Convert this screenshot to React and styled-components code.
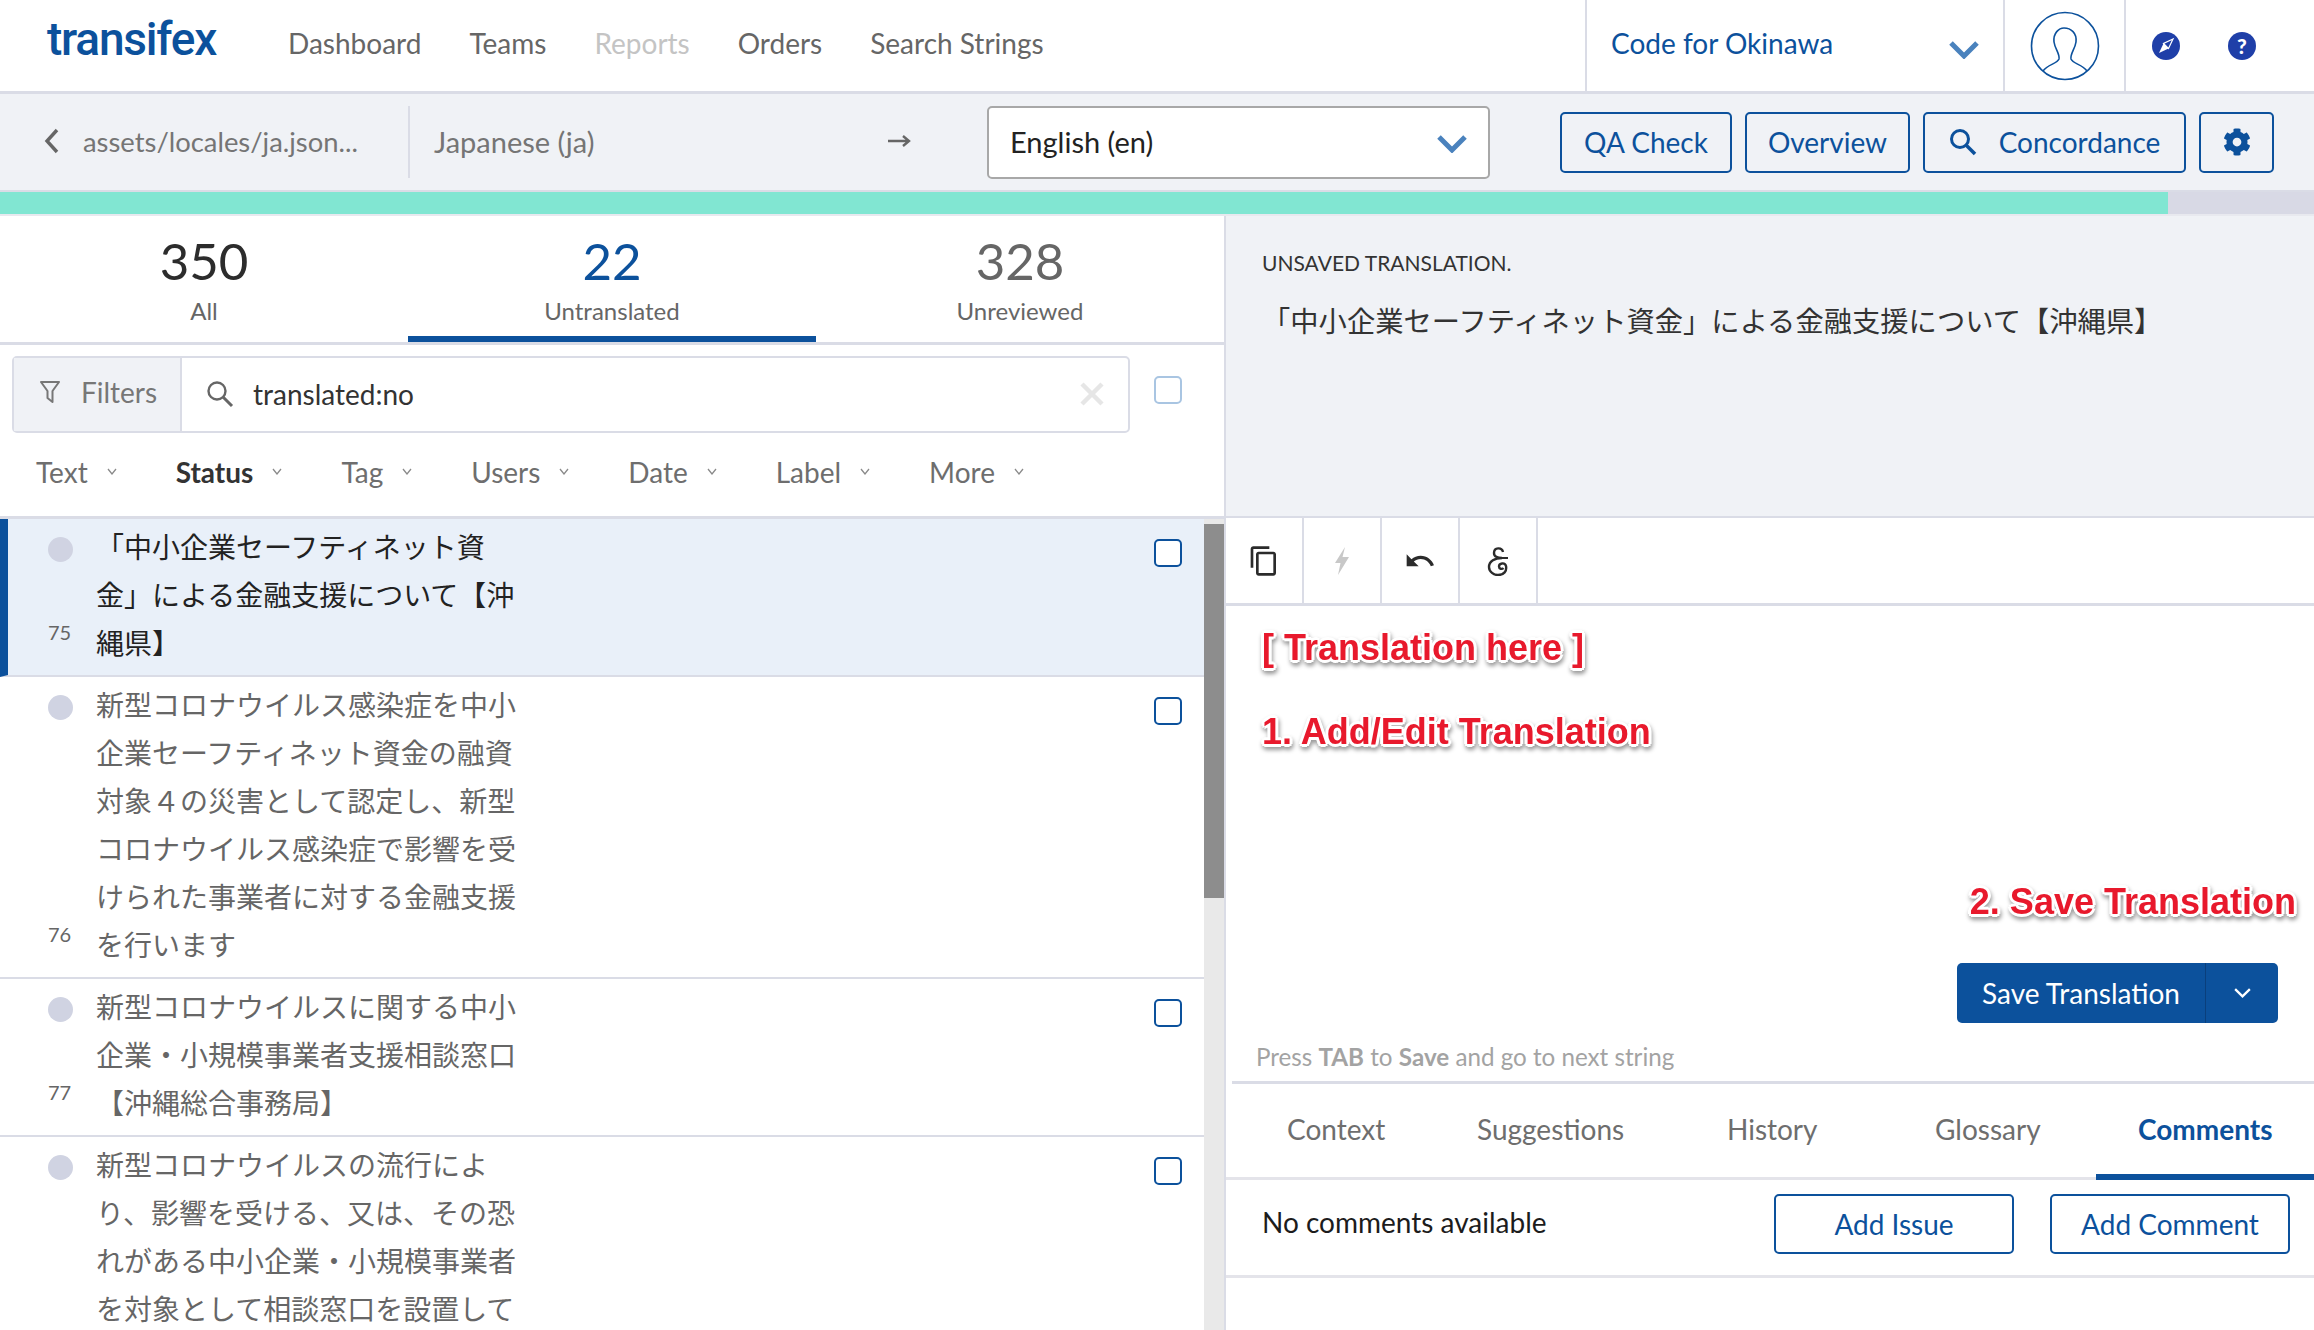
import React from "react";
import styled, { createGlobalStyle } from "styled-components";
import { FaCog } from "react-icons/fa";
import { MdContentCopy, MdUndo } from "react-icons/md";

const BLUE = "#0c519c";
const LINE = "#dadce6";
const SANS = `Lato, "Noto Sans CJK JP", sans-serif`;
const CJK = `"Noto Sans CJK JP", sans-serif`;

const GlobalStyle = createGlobalStyle`
  html, body {
    margin: 0;
    padding: 0;
    background: #fff;
    font-family: ${SANS};
  }
  * {
    box-sizing: border-box;
  }
`;

const Page = styled.div`
  width: 2314px;
  height: 1330px;
  overflow: hidden;
  display: flex;
  flex-direction: column;
`;

const TopNav = styled.header`
  height: 94px;
  flex: none;
  display: flex;
  border-bottom: 3px solid ${LINE};
`;

const Logo = styled.div`
  width: 288px;
  padding: 11px 0 0 47px;
  font-family: Roboto, sans-serif;
  font-size: 46px;
  font-weight: 500;
  line-height: 56px;
  letter-spacing: -1.2px;
  color: ${BLUE};
`;

const NavLinks = styled.nav`
  flex: 1;
  display: flex;
  gap: 48px;
  padding-top: 26px;
`;

const NavLink = styled.span`
  font-size: 28px;
  line-height: 34px;
  color: ${(p) => (p.$off ? "#c4c4c4" : "#666")};
`;

const OrgPicker = styled.div`
  width: 418px;
  display: flex;
  align-items: center;
  justify-content: space-between;
  padding: 0 24px 6px 24px;
  border-left: 2px solid ${LINE};
  font-size: 28px;
  color: ${BLUE};

  svg {
    margin-top: 14px;
  }
`;

const AvatarCell = styled.div`
  width: 121px;
  display: flex;
  align-items: center;
  justify-content: center;
  border-left: 2px solid ${LINE};
`;

const HelpCell = styled.div`
  width: 190px;
  display: flex;
  align-items: center;
  gap: 48px;
  padding-left: 26px;
  border-left: 2px solid ${LINE};
`;

const SubBar = styled.div`
  height: 98px;
  flex: none;
  display: flex;
  align-items: center;
  background: #f0f2f6;
  border-bottom: 2px solid ${LINE};
`;

const BackLink = styled.div`
  width: 410px;
  height: 72px;
  display: flex;
  align-items: center;
  gap: 23px;
  padding: 0 0 2px 44px;
  border-right: 2px solid ${LINE};
  font-size: 27.4px;
  color: #757575;
`;

const SourceLang = styled.div`
  width: 577px;
  display: flex;
  align-items: center;
  justify-content: space-between;
  padding: 0 75px 2px 24px;
  font-size: 29px;
  color: #757575;
`;

const LangSelect = styled.div`
  width: 503px;
  height: 73px;
  display: flex;
  align-items: center;
  justify-content: space-between;
  padding: 0 21px 2px 21px;
  background: #fff;
  border: 2px solid #a8a8a8;
  border-radius: 5px;
  font-size: 29px;
  color: #222;

  svg {
    margin-top: 6px;
  }
`;

const SubActions = styled.div`
  display: flex;
  gap: 13px;
  margin-left: 70px;
`;

const ActionButton = styled.div`
  height: 61px;
  display: flex;
  align-items: center;
  justify-content: center;
  gap: 22px;
  width: ${(p) => p.$w}px;
  padding-bottom: 1px;
  border: 2px solid ${BLUE};
  border-radius: 5px;
  font-size: 28px;
  color: ${BLUE};
`;

const Progress = styled.div`
  height: 24px;
  flex: none;
  background: #d8d9e5;
  border-bottom: 2px solid #e8e9ef;
`;

const ProgressFill = styled.div`
  height: 100%;
  background: #81e6d2;
`;

const Main = styled.div`
  flex: 1;
  min-height: 0;
  display: flex;
`;

const LeftPanel = styled.section`
  width: 1226px;
  flex: none;
  display: flex;
  flex-direction: column;
  border-right: 2px solid ${LINE};
`;

const Stats = styled.div`
  height: 129px;
  flex: none;
  display: grid;
  grid-template-columns: 408px 408px 408px;
  border-bottom: 3px solid ${LINE};
`;

const Stat = styled.div`
  display: flex;
  flex-direction: column;
  align-items: center;
  height: 126px;
  padding-top: 17px;
  border-bottom: 6px solid ${(p) => (p.$active ? BLUE : "transparent")};
`;

const StatNumber = styled.div`
  font-size: 51px;
  line-height: 56px;
  color: ${(p) => p.$color};
`;

const StatLabel = styled.div`
  margin-top: 7px;
  font-size: 24px;
  line-height: 30px;
  color: #666;
`;

const FilterRow = styled.div`
  display: flex;
  align-items: flex-start;
  gap: 24px;
  padding: 11px 0 0 12px;
`;

const FilterBox = styled.div`
  width: 1118px;
  height: 77px;
  display: flex;
  border: 2px solid ${LINE};
  border-radius: 5px;
`;

const FilterTag = styled.div`
  width: 168px;
  display: flex;
  align-items: center;
  gap: 21px;
  padding: 0 0 6px 26px;
  background: #f0f2f6;
  border-right: 2px solid ${LINE};
  font-size: 28px;
  color: #777;
`;

const SearchField = styled.div`
  flex: 1;
  display: flex;
  align-items: center;
  gap: 19px;
  padding: 0 24px 2px;
  font-size: 28px;
  color: #333;
`;

const SearchText = styled.span`
  flex: 1;
`;

const Check = styled.div`
  width: 28px;
  height: 28px;
  flex: none;
  background: #fff;
  border: 2px solid ${(p) => (p.$pale ? "#a9c5e2" : BLUE)};
  border-radius: 5px;
`;

const PaleCheck = styled(Check)`
  margin-top: 20px;
`;

const Facets = styled.div`
  height: 86px;
  flex: none;
  display: flex;
  align-items: center;
  gap: 59px;
  padding: 0 0 6px 36px;
  border-bottom: 3px solid ${LINE};
`;

const Facet = styled.div`
  display: flex;
  align-items: center;
  gap: 19px;
  font-size: 28px;
  font-weight: ${(p) => (p.$bold ? 700 : 400)};
  color: ${(p) => (p.$bold ? "#333" : "#6e6e6e")};
`;

const ListArea = styled.div`
  flex: 1;
  min-height: 0;
  display: flex;
  overflow: hidden;
`;

const List = styled.div`
  flex: 1;
`;

const Row = styled.div`
  display: flex;
  padding: 3px 22px 9px ${(p) => (p.$active ? 40 : 48)}px;
  background: ${(p) => (p.$active ? "#e9f0f9" : "#fff")};
  border-left: ${(p) => (p.$active ? `8px solid ${BLUE}` : "none")};
  border-bottom: 2px solid ${LINE};
`;

const Gutter = styled.div`
  width: 48px;
  flex: none;
  display: flex;
  flex-direction: column;
  justify-content: space-between;
`;

const Dot = styled.div`
  width: 25px;
  height: 25px;
  margin-top: 15px;
  border-radius: 50%;
  background: #d0d3e2;
`;

const RowNumber = styled.div`
  margin-bottom: 22px;
  font-size: 20px;
  line-height: 24px;
  color: #666;
`;

const RowText = styled.div`
  width: 424px;
  font-family: ${CJK};
  font-size: 28px;
  line-height: 48px;
  color: ${(p) => (p.$active ? "#222" : "#666")};
`;

const RowCheck = styled(Check)`
  margin: 17px 0 0 auto;
`;

const ScrollTrack = styled.div`
  width: 20px;
  flex: none;
  padding-top: 5px;
  background: #e9e9e9;
`;

const ScrollThumb = styled.div`
  height: 374px;
  background: #8d8d8d;
`;

const RightPanel = styled.section`
  flex: 1;
  min-width: 0;
  display: flex;
  flex-direction: column;
`;

const Source = styled.div`
  height: 302px;
  flex: none;
  padding: 34px 36px 0;
  background: #f0f2f6;
  border-bottom: 2px solid ${LINE};
`;

const SourceNote = styled.div`
  font-size: 21px;
  line-height: 26px;
  color: #333;
`;

const SourceText = styled.div`
  margin-top: 22px;
  font-family: ${CJK};
  font-size: 28.3px;
  line-height: 44px;
  color: #333;
`;

const Toolbar = styled.div`
  height: 88px;
  flex: none;
  display: flex;
  border-bottom: 3px solid ${LINE};
`;

const Tool = styled.div`
  width: 78px;
  display: flex;
  align-items: center;
  justify-content: center;
  border-right: 2px solid ${LINE};
  color: #2b2b2b;
`;

const Editor = styled.div`
  height: 478px;
  flex: none;
  display: flex;
  flex-direction: column;
  margin-left: 6px;
  padding: 18px 36px 0 30px;
  border-bottom: 3px solid ${LINE};
`;

const Note = styled.div`
  font-family: "Liberation Sans", sans-serif;
  font-weight: 700;
  font-size: 36px;
  line-height: 48px;
  white-space: nowrap;
  color: #e8192c;
  text-shadow: 3px 0 0 #fff, -3px 0 0 #fff, 0 3px 0 #fff, 0 -3px 0 #fff,
    2px 2px 0 #fff, -2px 2px 0 #fff, 2px -2px 0 #fff, -2px -2px 0 #fff;
  filter: drop-shadow(1px 3px 2px rgba(0, 0, 0, 0.4));
`;

const SecondNote = styled(Note)`
  margin-top: 36px;
`;

const SaveNote = styled(Note)`
  align-self: flex-end;
  margin: 122px -18px 0 0;
`;

const SaveButton = styled.div`
  width: 321px;
  height: 60px;
  align-self: flex-end;
  display: flex;
  margin-top: 37px;
  background: ${BLUE};
  border-radius: 5px;
  color: #fff;
  font-size: 28px;
`;

const SaveLabel = styled.div`
  flex: 1;
  display: flex;
  align-items: center;
  justify-content: center;
  border-right: 1px solid #0a3f7c;
`;

const SaveCaret = styled.div`
  width: 72px;
  display: flex;
  align-items: center;
  justify-content: center;
`;

const Hint = styled.div`
  margin: 19px 0 0 -6px;
  font-size: 24.2px;
  line-height: 30px;
  color: #a3a3a3;
`;

const Tabs = styled.div`
  height: 96px;
  flex: none;
  display: flex;
  border-bottom: 3px solid #e4e4ea;
`;

const Tab = styled.div`
  width: ${(p) => p.$w}px;
  height: 96px;
  flex: none;
  padding: 27px 0 0 ${(p) => p.$pad}px;
  font-size: 28px;
  line-height: 36px;
  font-weight: ${(p) => (p.$active ? 700 : 400)};
  color: ${(p) => (p.$active ? BLUE : "#6e6e6e")};
  border-bottom: 6px solid ${(p) => (p.$active ? BLUE : "transparent")};
`;

const CommentRow = styled.div`
  height: 98px;
  flex: none;
  display: flex;
  align-items: center;
  gap: 36px;
  padding: 0 24px 7px 36px;
  border-bottom: 3px solid #e4e4ea;
`;

const CommentText = styled.div`
  flex: 1;
  padding-bottom: 4px;
  font-size: 28px;
  color: #1c1c1c;
`;

const OutlineButton = styled.div`
  width: 240px;
  height: 60px;
  display: flex;
  align-items: center;
  justify-content: center;
  border: 2px solid ${BLUE};
  border-radius: 5px;
  font-size: 28px;
  color: ${BLUE};
`;

const HelpBadge = styled.div`
  width: 28px;
  height: 28px;
  display: flex;
  align-items: center;
  justify-content: center;
  border-radius: 50%;
  background: #1f3fa8;
  color: #fff;
  font-size: 21px;
  font-weight: 900;
`;

const Chevron = ({ w = 30, h = 18, color = "#4a82bd", sw = 5 }) => (
  <svg width={w} height={h} viewBox="0 0 30 18" preserveAspectRatio="none">
    <path d="M2 2 L15 15 L28 2" fill="none" stroke={color} strokeWidth={sw} />
  </svg>
);

const SmallCaret = () => (
  <svg width="10" height="7" viewBox="0 0 10 7">
    <path d="M1 1 L5 6 L9 1" fill="none" stroke="#8a8a8a" strokeWidth="1.3" />
  </svg>
);

const SearchIcon = ({ size = 28, color = "#666", sw = 2.4 }) => (
  <svg width={size} height={size} viewBox="0 0 28 28">
    <circle cx="11" cy="11" r="8.5" fill="none" stroke={color} strokeWidth={sw} />
    <path d="M17 17 L26 26" stroke={color} strokeWidth={sw + 0.6} />
  </svg>
);

const FilterIcon = () => (
  <svg width="20" height="24" viewBox="0 0 20 24">
    <path
      d="M1 2 H19 L12.5 11 V22 L7.5 18 V11 Z"
      fill="none"
      stroke="#777"
      strokeWidth="2"
      strokeLinejoin="round"
    />
  </svg>
);

const ClearIcon = () => (
  <svg width="24" height="24" viewBox="0 0 24 24">
    <path d="M2 2 L22 22 M22 2 L2 22" stroke="#e6e6e6" strokeWidth="4.5" />
  </svg>
);

const AvatarIcon = () => (
  <svg width="70" height="70" viewBox="0 0 70 70">
    <circle cx="35" cy="35" r="33.5" fill="none" stroke={BLUE} strokeWidth="1.6" />
    <path
      d="M13 60 C18 53 27 53 29 48 C30 43 25 38 24 31 C23 22 29 17 34 17 C41 17 47 22 46 31 C45 38 40 43 41 48 C43 53 52 53 57 60"
      fill="none"
      stroke={BLUE}
      strokeWidth="1.6"
    />
  </svg>
);

const CompassIcon = () => (
  <svg width="28" height="28" viewBox="0 0 28 28">
    <circle cx="14" cy="14" r="14" fill="#1f3fa8" />
    <path d="M7 21 L11.5 11.5 L16.5 16.5 Z" fill="#fff" />
    <path d="M21 7 L16.5 16.5 L11.5 11.5 Z" fill="none" stroke="#fff" strokeWidth="1.2" />
  </svg>
);

const ArrowIcon = () => (
  <svg width="24" height="14" viewBox="0 0 24 14">
    <path d="M0 7 H20 M15 2 L21 7 L15 12" fill="none" stroke="#666" strokeWidth="2.4" />
  </svg>
);

const BackIcon = () => (
  <svg width="16" height="26" viewBox="0 0 16 26">
    <path d="M13 2 L3 13 L13 24" fill="none" stroke="#666" strokeWidth="3.4" />
  </svg>
);

const BoltIcon = () => (
  <svg width="14" height="28" viewBox="0 0 14 28">
    <path d="M10 0 L0 16 H5.5 L3 28 L14 10 H7.5 Z" fill="#c8c8c8" />
  </svg>
);

const AmpersandIcon = () => (
  <svg width="22" height="30" viewBox="0 0 22 30">
    <path
      d="M16 6 C15 1 7 1 7 7 C7 11 11 12 15 12 C8 12 2 15 2 21 C2 26 7 29 11 29 C17 29 20 25 19 20 C18 16 12 17 12 20.5 C12 23 15 23.5 16.5 22"
      fill="none"
      stroke="#2b2b2b"
      strokeWidth="2.4"
    />
    <path d="M15 12 H21" stroke="#2b2b2b" strokeWidth="2" />
  </svg>
);

const facets = [
  { label: "Text" },
  { label: "Status", bold: true },
  { label: "Tag" },
  { label: "Users" },
  { label: "Date" },
  { label: "Label" },
  { label: "More" },
];

const rows = [
  {
    id: 75,
    active: true,
    text: "「中小企業セーフティネット資金」による金融支援について【沖縄県】",
  },
  {
    id: 76,
    text: "新型コロナウイルス感染症を中小企業セーフティネット資金の融資対象４の災害として認定し、新型コロナウイルス感染症で影響を受けられた事業者に対する金融支援を行います",
  },
  {
    id: 77,
    text: "新型コロナウイルスに関する中小企業・小規模事業者支援相談窓口【沖縄総合事務局】",
  },
  {
    id: 78,
    text: "新型コロナウイルスの流行により、影響を受ける、又は、その恐れがある中小企業・小規模事業者を対象として相談窓口を設置しています",
  },
];

const tabs = [
  { label: "Context", w: 220, pad: 61 },
  { label: "Suggestions", w: 250, pad: 31 },
  { label: "History", w: 208, pad: 31 },
  { label: "Glossary", w: 192, pad: 31 },
  { label: "Comments", w: 218, pad: 42, active: true },
];

const App = () => {
  return (
    <Page>
      <GlobalStyle />
      <TopNav>
        <Logo>transifex</Logo>
        <NavLinks>
          <NavLink>Dashboard</NavLink>
          <NavLink>Teams</NavLink>
          <NavLink $off>Reports</NavLink>
          <NavLink>Orders</NavLink>
          <NavLink>Search Strings</NavLink>
        </NavLinks>
        <OrgPicker>
          Code for Okinawa
          <Chevron />
        </OrgPicker>
        <AvatarCell>
          <AvatarIcon />
        </AvatarCell>
        <HelpCell>
          <CompassIcon />
          <HelpBadge>?</HelpBadge>
        </HelpCell>
      </TopNav>

      <SubBar>
        <BackLink>
          <BackIcon />
          assets/locales/ja.json...
        </BackLink>
        <SourceLang>
          Japanese (ja)
          <ArrowIcon />
        </SourceLang>
        <LangSelect>
          English (en)
          <Chevron />
        </LangSelect>
        <SubActions>
          <ActionButton $w={172}>QA Check</ActionButton>
          <ActionButton $w={165}>Overview</ActionButton>
          <ActionButton $w={263}>
            <SearchIcon size={28} color={BLUE} sw={3} />
            Concordance
          </ActionButton>
          <ActionButton $w={75}>
            <FaCog size={28} />
          </ActionButton>
        </SubActions>
      </SubBar>

      <Progress>
        <ProgressFill style={{ width: `${(2168 / 2314) * 100}%` }} />
      </Progress>

      <Main>
        <LeftPanel>
          <Stats>
            <Stat>
              <StatNumber $color="#2c2c2c">350</StatNumber>
              <StatLabel>All</StatLabel>
            </Stat>
            <Stat $active>
              <StatNumber $color={BLUE}>22</StatNumber>
              <StatLabel>Untranslated</StatLabel>
            </Stat>
            <Stat>
              <StatNumber $color="#666">328</StatNumber>
              <StatLabel>Unreviewed</StatLabel>
            </Stat>
          </Stats>

          <FilterRow>
            <FilterBox>
              <FilterTag>
                <FilterIcon />
                Filters
              </FilterTag>
              <SearchField>
                <SearchIcon />
                <SearchText>translated:no</SearchText>
                <ClearIcon />
              </SearchField>
            </FilterBox>
            <PaleCheck $pale />
          </FilterRow>

          <Facets>
            {facets.map((f) => (
              <Facet key={f.label} $bold={f.bold}>
                {f.label}
                <SmallCaret />
              </Facet>
            ))}
          </Facets>

          <ListArea>
            <List>
              {rows.map((r) => (
                <Row key={r.id} $active={r.active}>
                  <Gutter>
                    <Dot />
                    <RowNumber>{r.id}</RowNumber>
                  </Gutter>
                  <RowText $active={r.active}>{r.text}</RowText>
                  <RowCheck />
                </Row>
              ))}
            </List>
            <ScrollTrack>
              <ScrollThumb />
            </ScrollTrack>
          </ListArea>
        </LeftPanel>

        <RightPanel>
          <Source>
            <SourceNote>UNSAVED TRANSLATION.</SourceNote>
            <SourceText>「中小企業セーフティネット資金」による金融支援について【沖縄県】</SourceText>
          </Source>

          <Toolbar>
            <Tool>
              <MdContentCopy size={32} />
            </Tool>
            <Tool>
              <BoltIcon />
            </Tool>
            <Tool>
              <MdUndo size={32} />
            </Tool>
            <Tool>
              <AmpersandIcon />
            </Tool>
          </Toolbar>

          <Editor>
            <Note>[ Translation here ]</Note>
            <SecondNote>1. Add/Edit Translation</SecondNote>
            <SaveNote>2. Save Translation</SaveNote>
            <SaveButton>
              <SaveLabel>Save Translation</SaveLabel>
              <SaveCaret>
                <Chevron w={17} h={10} color="#fff" sw={4} />
              </SaveCaret>
            </SaveButton>
            <Hint>
              Press <b>TAB</b> to <b>Save</b> and go to next string
            </Hint>
          </Editor>

          <Tabs>
            {tabs.map((t) => (
              <Tab key={t.label} $w={t.w} $pad={t.pad} $active={t.active}>
                {t.label}
              </Tab>
            ))}
          </Tabs>

          <CommentRow>
            <CommentText>No comments available</CommentText>
            <OutlineButton>Add Issue</OutlineButton>
            <OutlineButton>Add Comment</OutlineButton>
          </CommentRow>
        </RightPanel>
      </Main>
    </Page>
  );
};

export default App;
